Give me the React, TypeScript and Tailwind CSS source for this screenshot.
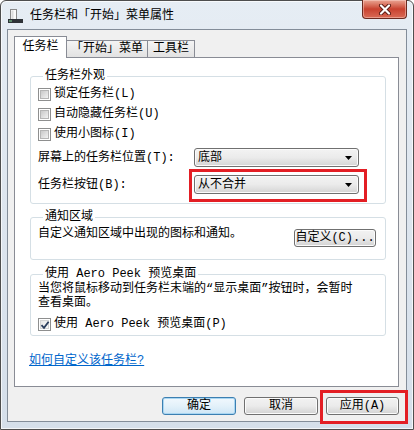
const font = "font-['Liberation_Mono','Noto_Sans_CJK_SC',monospace]";

function CheckBox({ checked = false }: { checked?: boolean }) {
  return (
    <span className="relative flex h-[13px] w-[13px] shrink-0 items-center justify-center border border-[#8e8f8f] bg-white">
      <span
        className={
          checked
            ? "h-[9px] w-[9px] border border-[#d4d4d4] bg-gradient-to-br from-[#e6e6e6] to-[#fafafa]"
            : "h-[9px] w-[9px] border border-[#b5b5b5] bg-gradient-to-br from-[#c9c9c9] to-[#f2f2f2]"
        }
      />
      {checked && (
        <svg className="absolute left-[1px] top-[1px]" width="10" height="10" viewBox="0 0 10 10">
          <path d="M1.5 5.2 L4 7.8 L8.6 1.8" fill="none" stroke="#2a3d5c" strokeWidth="1.8" />
        </svg>
      )}
    </span>
  );
}

function Combo({ value }: { value: string }) {
  return (
    <div className="flex h-[19px] w-[165px] items-center justify-between rounded-[3px] border border-[#707070] bg-gradient-to-b from-[#f3f3f3] via-[#ebebeb] to-[#d4d4d4] pl-[3px] pr-[6px] shadow-[inset_0_0_0_1px_#fbfbfb]">
      <span className="leading-[16px]">{value}</span>
      <svg width="7" height="4" viewBox="0 0 7 4">
        <path d="M0 0h7L3.5 4z" fill="#000" />
      </svg>
    </div>
  );
}

function Group({ title, children, className }: { title: string; children: React.ReactNode; className: string }) {
  return (
    <fieldset className={"rounded-[3px] border border-[#d5dfe5] pl-[7px] " + className}>
      <legend className="ml-[5px] px-[2px] leading-[16px]">{title}</legend>
      {children}
    </fieldset>
  );
}

export default function App() {
  return (
    <div className={"relative h-[430px] w-[414px] bg-white text-[12px] text-black " + font}>
      <div className="flex h-[430px] w-[414px] flex-col rounded-t-[6px] border border-[#4e4e4e] bg-gradient-to-b from-[#e6edf4] via-[#dde5ee] to-[#d5dfea] px-[6px] pb-[7px] shadow-[inset_0_0_0_1px_rgba(255,255,255,0.7)]">
        {/* title bar */}
        <div className="flex h-[28px] shrink-0 items-start">
          <svg className="ml-[1px] mt-[8px]" width="15" height="14" viewBox="0 0 15 14">
            <rect x="2.5" y="0.5" width="6" height="11" fill="#fbfbfb" stroke="#8a8a8a" />
            <rect x="3.5" y="1.5" width="2" height="9" fill="#dcdcdc" />
            <rect x="0" y="10" width="15" height="4" fill="#2f3338" />
            <rect x="1" y="11" width="3" height="2" fill="#5c8a6a" />
          </svg>
          <span className="ml-[7px] mt-[7px] leading-[16px]">任务栏和「开始」菜单属性</span>
          <div className="ml-auto -mt-px flex h-[19px] w-[45px] items-center justify-center rounded-b-[4px] border border-t-0 border-[#6b2a20] bg-gradient-to-b from-[#e9a493] via-[#c8412f] to-[#d96a55] shadow-[inset_0_0_0_1px_rgba(255,220,210,0.45)]">
            <svg width="14" height="11" viewBox="0 0 14 11">
              <path d="M3 1.5 L11 9.5 M11 1.5 L3 9.5" stroke="#5a1a12" strokeWidth="4" strokeLinecap="round" />
              <path d="M3 1.5 L11 9.5 M11 1.5 L3 9.5" stroke="#ffffff" strokeWidth="2.2" strokeLinecap="round" />
            </svg>
          </div>
        </div>

        {/* client area */}
        <div className="flex flex-1 flex-col border border-[#838d99] bg-[#f0f0f0] pl-[6px] pr-[7px] pt-[6px]">
          <div className="relative z-10 -mb-px flex h-[22px] items-end">
            <div className="flex h-[22px] w-[53px] items-center justify-center border border-b-0 border-[#898c95] bg-white pb-[2px]">
              任务栏
            </div>
            <div className="-ml-px flex h-[18px] w-[82px] items-center justify-center border border-[#898c95] bg-gradient-to-b from-[#f4f4f4] to-[#e2e2e2]">
              「开始」菜单
            </div>
            <div className="-ml-px flex h-[18px] w-[48px] items-center justify-center border border-[#898c95] bg-gradient-to-b from-[#f4f4f4] to-[#e2e2e2]">
              工具栏
            </div>
          </div>

          <div className="flex h-[330px] flex-col border border-[#898c95] bg-white pl-[15px] pr-[12px] pt-[10px]">
            <Group title="任务栏外观" className="pb-[9px]">
              <div className="flex h-[20px] items-center gap-[3px]">
                <CheckBox />
                <span>锁定任务栏(L)</span>
              </div>
              <div className="flex h-[20px] items-center gap-[3px]">
                <CheckBox />
                <span>自动隐藏任务栏(U)</span>
              </div>
              <div className="flex h-[20px] items-center gap-[3px]">
                <CheckBox />
                <span>使用小图标(I)</span>
              </div>
              <div className="mt-[4px] flex items-center">
                <span className="w-[156px]">屏幕上的任务栏位置(T):</span>
                <Combo value="底部" />
              </div>
              <div className="mt-[8px] flex items-center">
                <span className="w-[156px]">任务栏按钮(B):</span>
                <Combo value="从不合并" />
              </div>
            </Group>

            <Group title="通知区域" className="mt-[5px] pb-[12px] pr-[9px]">
              <div className="flex items-start justify-between">
                <span className="mt-px leading-[16px]">自定义通知区域中出现的图标和通知。</span>
                <div className="mt-[4px] flex h-[18px] w-[82px] items-center justify-center rounded-[3px] border border-[#707070] bg-gradient-to-b from-[#f2f2f2] via-[#ebebeb] to-[#d2d2d2] shadow-[inset_0_0_0_1px_#fbfbfb]">
                  自定义(C)...
                </div>
              </div>
            </Group>

            <Group title="使用 Aero Peek 预览桌面" className="mt-[6px] pb-[1px]">
              <p className="leading-[14px]">
                当您将鼠标移动到任务栏末端的“显示桌面”按钮时，会暂时
                <br />
                查看桌面。
              </p>
              <div className="mt-[4px] flex h-[20px] items-center gap-[3px]">
                <CheckBox checked />
                <span>使用 Aero Peek 预览桌面(P)</span>
              </div>
            </Group>

            <a className="-ml-px mt-[17px] self-start leading-[16px] text-[#0066cc] underline">如何自定义该任务栏?</a>
          </div>

          <div className="mt-[10px] flex justify-end gap-[8px]">
            <div className="flex h-[18px] w-[74px] items-center justify-center rounded-[3px] border border-[#3c7fb1] bg-gradient-to-b from-[#f1f8fd] via-[#e3f1fa] to-[#cfe6f5] shadow-[inset_0_0_0_1px_#a9d6f2]">
              确定
            </div>
            <div className="flex h-[18px] w-[74px] items-center justify-center rounded-[3px] border border-[#707070] bg-gradient-to-b from-[#f2f2f2] via-[#ebebeb] to-[#d2d2d2] shadow-[inset_0_0_0_1px_#fbfbfb]">
              取消
            </div>
            <div className="flex h-[18px] w-[73px] items-center justify-center rounded-[3px] border border-[#707070] bg-gradient-to-b from-[#f2f2f2] via-[#ebebeb] to-[#d2d2d2] shadow-[inset_0_0_0_1px_#fbfbfb]">
              应用(A)
            </div>
          </div>
        </div>
      </div>

      {/* red annotation boxes */}
      <div className="absolute left-[189px] top-[169px] h-[33px] w-[178px] border-[3px] border-[#e31e24]" />
      <div className="absolute left-[320px] top-[390px] h-[34px] w-[88px] border-[3px] border-[#e31e24]" />
    </div>
  );
}
